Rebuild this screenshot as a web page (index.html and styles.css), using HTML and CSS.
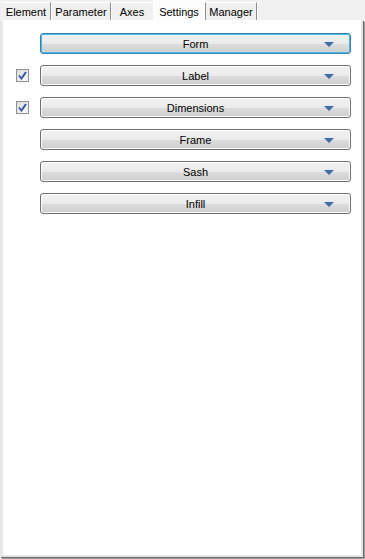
FILE: index.html
```html
<!DOCTYPE html>
<html lang="en">
<head>
    <meta charset="UTF-8">
    <title>Settings</title>
    <link rel="stylesheet" href="styles.css">
</head>
<body>

    <div class="tabs">
        <div class="tab tab-element">Element</div>
        <div class="tab tab-parameter">Parameter</div>
        <div class="tab tab-axes no-sep">Axes</div>
        <div class="tab tab-settings active">Settings</div>
        <div class="tab tab-manager">Manager</div>
    </div>

    <div class="panel">
        <div class="row">
            <span class="check-slot"></span>
            <button class="drop focused">Form<span class="arrow"></span></button>
        </div>
        <div class="row">
            <span class="check-slot"><span class="checkbox"><svg width="9" height="9" viewBox="0 0 9 9"><path d="M1 4.5 L3.5 7.5 L8 1" fill="none" stroke="#2a4fa8" stroke-width="1.8"/></svg></span></span>
            <button class="drop">Label<span class="arrow"></span></button>
        </div>
        <div class="row">
            <span class="check-slot"><span class="checkbox"><svg width="9" height="9" viewBox="0 0 9 9"><path d="M1 4.5 L3.5 7.5 L8 1" fill="none" stroke="#2a4fa8" stroke-width="1.8"/></svg></span></span>
            <button class="drop">Dimensions<span class="arrow"></span></button>
        </div>
        <div class="row">
            <span class="check-slot"></span>
            <button class="drop">Frame<span class="arrow"></span></button>
        </div>
        <div class="row">
            <span class="check-slot"></span>
            <button class="drop">Sash<span class="arrow"></span></button>
        </div>
        <div class="row">
            <span class="check-slot"></span>
            <button class="drop">Infill<span class="arrow"></span></button>
        </div>
    </div>

</body>
</html>
```

FILE: styles.css
```css
/* Base */
html, body {
    height: 100%;
}

body {
    margin: 0;
    background-color: #f0f0f0;
    font-family: 'Liberation Sans', Arial, sans-serif;
    font-size: 11px;
    color: #000;
    display: flex;
    flex-direction: column;
}

/* Tab strip */
.tabs {
    display: flex;
    padding: 2px 0 0 2px;
    height: 18px;
}

.tab {
    padding-top: 3px;
    text-align: center;
    border-right: 1px solid #8a8a8a;
    box-shadow: 1px 0 0 #fff;
    border-top: 1px solid #fff;
    margin-right: 1px;
    background-color: #f0f0f0;
    box-sizing: border-box;
}

.tab-element { width: 49px; }
.tab-parameter { width: 59px; }
.tab-axes { width: 41px; }
.tab-settings { width: 52px; }
.tab-manager { width: 52px; }

.tab.no-sep {
    border-right-color: transparent;
    box-shadow: none;
    margin-right: 0;
}

.tab.active {
    margin-top: -2px;
    padding-top: 5px;
    height: 21px;
    background-color: #fcfcfc;
    border-left: 1px solid #fff;
    border-right: 1px solid #fff;
    box-shadow: none;
    margin-right: 0;
    position: relative;
    z-index: 1;
}

.tab.active + .tab {
    border-left: 1px solid #8a8a8a;
}

/* Tab page */
.panel {
    flex: 1;
    background-color: #fff;
    border-top: 1px solid #fff;
    border-left: 3px solid #e8e8e8;
    border-right: 2px solid #e4e4e4;
    border-bottom: 2px solid #e4e4e4;
    box-shadow: 1px 1px 0 #696969, 2px 2px 0 #a0a0a0;
    margin-right: 2px;
    margin-bottom: 2px;
    padding: 12px 0 0 13px;
    display: flex;
    flex-direction: column;
    gap: 11px;
}

.row {
    display: flex;
    align-items: center;
}

.check-slot {
    width: 24px;
    display: flex;
    align-items: center;
}

/* Checkbox */
.checkbox {
    width: 11px;
    height: 11px;
    border: 1px solid #8e8f8f;
    background: linear-gradient(135deg, #dcdcdc, #f6f6f6);
    display: flex;
    align-items: center;
    justify-content: center;
}

/* Drop-down buttons */
.drop {
    position: relative;
    width: 311px;
    height: 21px;
    font-family: 'Liberation Sans', Arial, sans-serif;
    font-size: 11px;
    color: #000;
    border: 1px solid #707070;
    border-radius: 3px;
    background: linear-gradient(#f2f2f2 0%, #ebebeb 50%, #dddddd 51%, #cfcfcf 100%);
    box-shadow: inset 0 0 0 1px #fcfcfc;
    padding: 0;
}

.drop.focused {
    border-color: #3c7fb1;
    box-shadow: inset 0 0 0 1px #48b8ec;
}

.arrow {
    position: absolute;
    right: 16px;
    top: 8px;
    width: 0;
    height: 0;
    border-left: 5px solid transparent;
    border-right: 5px solid transparent;
    border-top: 5px solid #3b6ea5;
}
```
